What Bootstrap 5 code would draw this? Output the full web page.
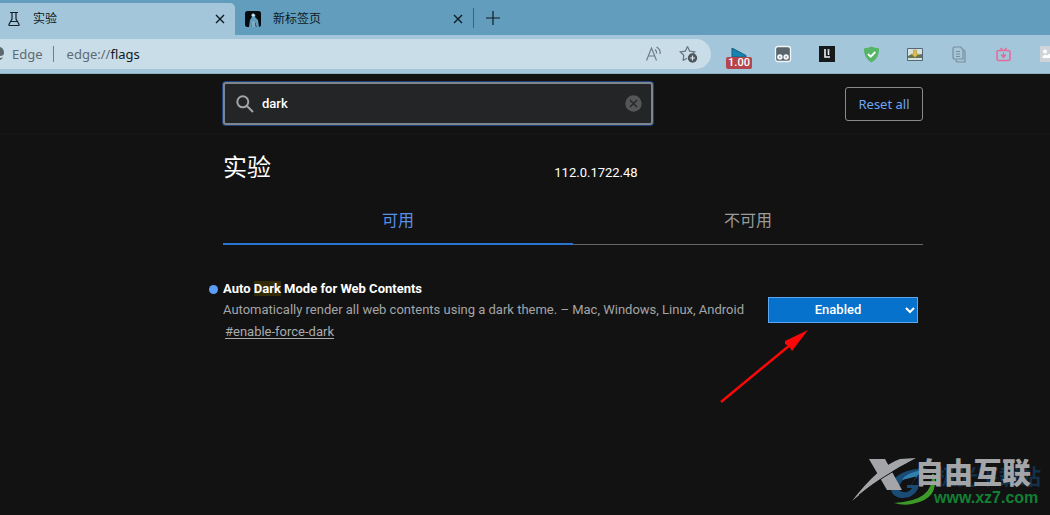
<!DOCTYPE html>
<html lang="zh-CN">
<head>
<meta charset="utf-8">
<meta name="viewport" content="width=device-width, initial-scale=1">
<title>实验</title>
<link href="https://cdn.jsdelivr.net/npm/bootstrap@5.3.0/dist/css/bootstrap.min.css" rel="stylesheet">
<style>
body{background:#121212;color:#fff;font-family:Roboto,"Noto Sans CJK SC",sans-serif;font-size:13px;line-height:20px;min-height:100vh;overflow-x:hidden}
button{font-family:inherit}
svg{display:block;flex:none}
.tabstrip{background:#629dbe;height:35px;font-size:12px;color:#0b1a24}
.tabstrip button,.pill button,.exts button{background:none;border:0;padding:0;color:inherit}
.tab-on{background:#a3c6da;width:235px;height:32px;border-top-right-radius:5px;padding:0 10px 0 6px}
.tab-off{width:238px;height:32px;padding:0 10px}
.tab-sep{width:1px;height:20px;background:#39637c}
.toolbar{background:#a3c6da;height:39px;border-bottom:1px solid #91aebe}
.pill{background:#c8dde8;height:30px;border-radius:0 15px 15px 0;font-family:"Noto Sans","Noto Sans CJK SC",sans-serif;color:#5f6b72;padding-right:13px;font-size:13px}
.pill-sep{width:1px;height:16px;background:#6f7f88;margin:0 13px 0 10px}
.url b{font-weight:400;color:#10181d}
.exts{width:339px;padding-left:6px}
.exts button{width:44px;height:34px;display:flex;align-items:center;justify-content:center;flex:none}
.exts button:last-child{justify-content:flex-start;padding-left:15px}
.rate{background:#b5454d;color:#fff;font:500 11px/12px Roboto,sans-serif;border-radius:2px;padding:0 2px}
.page-col{margin-left:223px;max-width:700px}
.searchbar{height:60px;border-bottom:1px solid #161616}
.searchbox{width:430px;height:43px;background:#242527;border:2px solid #7d868f;border-radius:3px;box-shadow:0 0 0 1px #204078;padding:0 9px 0 11px}
.searchbox input{background:transparent;border:0;outline:0;color:#fff;padding:0;font-weight:500}
.reset-btn{width:78px;height:34px;border:1px solid #8a8a8a;border-radius:3px;color:#6ea6f5;background:none;font:13px/20px "Noto Sans",sans-serif;padding:0}
.exp-head{padding-top:16px}
.exp-title{font-size:24px;line-height:36px;font-weight:400}
.exp-version{padding:13px 52px 0 0}
.flag-tabs{font-size:16px;height:47px;margin-top:12px}
.flag-tabs button{border:0;background:none;color:#9b9b9b;border-bottom:1px solid #666;padding:0 0 1px}
.flag-tabs .on{color:#5a90e8;border-bottom:2px solid #2a74d0;padding:0}
.flag-row{padding-top:30px}
.flag-name{font-weight:700;line-height:20px}
.flag-name mark{background:#332b05;color:#fff;padding:0}
.flag-dot{width:9px;height:9px;background:#5b9df8;left:-14px;top:10px}
.flag-desc{color:#a4a5a6;line-height:22px}
.flag-link{color:#a9abac;line-height:22px;text-underline-offset:2px;margin-left:2px}
.flag-pick{width:150px;margin:22px 5px 0 0}
.flag-pick select{appearance:none;width:100%;height:26px;background:#0672cb;border:1px solid #5da5f0;color:#fff;text-align:center;text-align-last:center;font:500 13px/20px Roboto,sans-serif;padding:0 10px 0 0}
.chevron{right:3px;top:10px}
.pointer{left:-48px;top:32px}
.wm{right:10px;bottom:5px;width:188px;height:56px}
.wm svg{left:0;top:0}
.wm-back{left:84px;top:8px;font:700 21px/26px "Noto Sans CJK SC",sans-serif;color:#143149}
.wm-name{left:63px;top:-1px;font:900 29px/36px "Noto Sans CJK SC",sans-serif;color:#a4a5a8}
.wm-url{left:82px;top:34px;font:700 16px/20px "Liberation Sans",sans-serif;color:#128034}
</style>
<script src="https://cdn.jsdelivr.net/npm/bootstrap@5.3.0/dist/js/bootstrap.bundle.min.js" defer></script>
</head>
<body class="position-relative">
<header>
  <div class="tabstrip d-flex align-items-end">
    <div class="tab-on d-flex align-items-center">
      <svg width="16" height="16" viewBox="0 0 16 16" fill="none" stroke="#15222b" stroke-width="1.2"><path d="M4 1.500h8M6 2v6L3 13.200Q2.500 14.500 3.800 14.500h8.400q1.300 0 .8-1.300L10 8V2M4.500 10.500h7"/></svg>
      <span class="ms-2 flex-grow-1">&nbsp;实验</span>
      <button type="button" aria-label="关闭"><svg width="10" height="10" viewBox="0 0 10 10" stroke="#101b22" stroke-width="1.4"><path d="M1 1l8 8M9 1L1 9"/></svg></button>
    </div>
    <div class="tab-off d-flex align-items-center">
      <svg width="16" height="16" viewBox="0 0 16 16"><rect width="16" height="16" rx="2.500" fill="#060b0e"/><path d="M4 16l1-7 2-3-1-2 2-2 2.500 2L10 6l3 3 1 7h-2.500l-1-4-2-2.500L7 12l-.5 4z" fill="#629dbe"/><path d="M6.500 16L7 11l1.500-2 1.500 2 .8 5z" fill="#7fadc5"/><circle cx="8.300" cy="4.300" r="1.300" fill="#dbe8ee"/></svg>
      <span class="ms-2 ps-1 flex-grow-1">新标签页</span>
      <button type="button" aria-label="关闭"><svg width="10" height="10" viewBox="0 0 10 10" stroke="#101b22" stroke-width="1.4"><path d="M1 1l8 8M9 1L1 9"/></svg></button>
    </div>
    <div class="d-flex align-items-center h-100">
      <span class="tab-sep"></span>
      <button type="button" class="ms-2 ps-1" aria-label="新建标签页"><svg width="14" height="14" viewBox="0 0 14 14" stroke="#101b22" stroke-width="1.200"><path d="M7 0v14M0 7h14"/></svg></button>
    </div>
  </div>
  <div class="toolbar d-flex align-items-center">
    <div class="pill d-flex align-items-center flex-grow-1">
      <svg width="4" height="14" viewBox="0 0 4 14"><path d="M0 0q4 1 4 6 0 3-4 3z" fill="#5d686e"/><path d="M0 11q2 0 3-1-1 3-3 3z" fill="#5d686e"/></svg>
      <span class="ms-2">Edge</span>
      <span class="pill-sep"></span>
      <a href="#" class="url flex-grow-1 text-decoration-none text-reset">edge://<b>flags</b></a>
      <button type="button" class="me-3" aria-label="朗读"><svg width="18" height="18" viewBox="0 0 18 18" fill="none" stroke="#6e7e88" stroke-width="1.200"><path d="M1.500 15.500L6.500 3l5 12.500M3.300 11h6.500M10 4.500q2 1.500 1.500 4M11.500 2q4.500 2.500 3.500 7"/></svg></button>
      <button type="button" aria-label="收藏"><svg width="19" height="19" viewBox="0 0 19 19"><path d="M8.500 1.500l2.200 4.700 5 .7-3.600 3.600M4 15.500l.8-5.200L1.300 6.900l5-.7 2.200-4.700M4 15.500l4-2.200" fill="none" stroke="#65737c" stroke-width="1.200"/><circle cx="13.500" cy="13" r="4.700" fill="#4c565c"/><path d="M13.500 10.500v5M11 13h5" stroke="#dce8ef" stroke-width="1.200"/></svg></button>
    </div>
    <div class="exts d-flex align-items-center overflow-hidden flex-shrink-0">
      <button type="button" class="flex-column pt-2"><svg width="16" height="9" viewBox="0 0 16 9"><path d="M1 0l14 7.500V9H1z" fill="#1683b0" stroke="#195d7d"/></svg><span class="rate">1.00</span></button>
      <button type="button" aria-label="脚本"><svg width="18" height="18" viewBox="0 0 18 18"><rect x="1.500" y="1.500" width="15" height="15" rx="2.500" fill="#58656d" stroke="#f2f5f7" stroke-width="1.300"/><circle cx="5.900" cy="12" r="2.700" fill="#f5f7f8"/><circle cx="12.100" cy="12" r="2.700" fill="#f5f7f8"/><circle cx="5.900" cy="12" r=".8" fill="#58656d"/><circle cx="12.100" cy="12" r=".8" fill="#58656d"/></svg></button>
      <button type="button" aria-label="扩展"><svg width="16" height="16" viewBox="0 0 16 16"><path d="M0 0h16v16H0z" fill="#15191b"/><path d="M6 3v8h5M9.500 5v4M8.500 4h2" fill="none" stroke="#eef2f4" stroke-width="1.600"/></svg></button>
      <button type="button" aria-label="防护"><svg width="17" height="17" viewBox="0 0 17 17"><path d="M8.500.5q3.500 2 7.500 1.800Q16.500 12 8.500 16.500.5 12 1 2.300 5 2.500 8.500.5z" fill="#54b566"/><path d="M5 8l2.700 2.700L12.300 6" fill="none" stroke="#fff" stroke-width="1.800"/></svg></button>
      <button type="button" aria-label="图片下载"><svg width="16" height="13" viewBox="0 0 16 13"><path d="M.5.500h15v12H.5z" fill="#d7e2df" stroke="#536777"/><path d="M1 8l4-2 4 1 6-1v4H1z" fill="#637458"/><path d="M6.500 2h3v4h2L8 9.500 4.500 6h2z" fill="#e3bf45" stroke="#9b8736" stroke-width=".5"/></svg></button>
      <button type="button" aria-label="复制"><svg width="14" height="17" viewBox="0 0 14 17" fill="none" stroke="#7b8e9b" stroke-width="1.200"><path d="M3 1h5.500L11 3.500V13H3q-2 0-2-2V3q0-2 2-2zM11 4q2 0 2 2v10H6q-2 0-2-2M4 5.500h4M4 8h4M4 10.500h4"/></svg></button>
      <button type="button" aria-label="视频下载"><svg width="15" height="15" viewBox="0 0 15 15" fill="none" stroke="#e46b9a" stroke-width="1.500"><rect x="1" y="3.500" width="13" height="10" rx="1.500"/><path d="M4.500 1l2 2M10.500 1l-2 2"/><path d="M7.500 5.500v2.500M5 8h5l-2.500 3z" fill="#e46b9a" stroke-width="1"/></svg></button>
      <button type="button" aria-label="更多"><svg width="16" height="16" viewBox="0 0 16 16"><path d="M0 0h16v16H0z" fill="#d0d4da"/><circle cx="5" cy="5.500" r="2" fill="#fff"/><path d="M2 12q2-5 5-2.500 2-2 4-2t5 4.500z" fill="#fff"/></svg></button>
    </div>
  </div>
</header>
<main>
  <div class="searchbar">
    <div class="page-col d-flex align-items-center justify-content-between h-100">
      <div class="searchbox d-flex align-items-center">
        <svg width="18" height="18" viewBox="0 0 18 18" fill="none" stroke="#a3a5a7" stroke-width="2"><circle cx="6.800" cy="6.800" r="5.500"/><path d="M11 11l6 6"/></svg>
        <input type="text" class="flex-grow-1 ms-2" value="dark" aria-label="搜索标志">
        <button type="button" class="border-0 bg-transparent p-0" aria-label="清除"><svg width="17" height="17" viewBox="0 0 17 17"><circle cx="8.500" cy="8.500" r="8.200" fill="#555657"/><path d="M5 5l7 7M12 5l-7 7" stroke="#27282a" stroke-width="1.500"/></svg></button>
      </div>
      <button type="button" class="reset-btn">Reset all</button>
    </div>
  </div>
  <div class="page-col">
    <div class="exp-head row g-0">
      <h1 class="exp-title col mb-0">实验</h1>
      <div class="exp-version col-auto">112.0.1722.48</div>
      <div class="col-4"></div>
    </div>
    <div class="flag-tabs d-flex" role="tablist">
      <button type="button" class="w-50 on" role="tab" aria-selected="true">可用</button>
      <button type="button" class="w-50" role="tab" aria-selected="false">不可用</button>
    </div>
    <div class="flag-row d-flex justify-content-between align-items-start">
      <div class="position-relative pt-1">
        <span class="flag-dot rounded-circle position-absolute"></span>
        <div class="flag-name"><label for="force-dark">Auto <mark>Dark</mark> Mode for Web Contents</label></div>
        <div class="flag-desc">Automatically render all web contents using a dark theme. – Mac, Windows, Linux, Android</div>
        <a href="#enable-force-dark" class="flag-link">#enable-force-dark</a>
      </div>
      <div class="flag-pick position-relative">
        <select id="force-dark"><option>Default</option><option selected>Enabled</option><option>Disabled</option></select>
        <svg class="chevron position-absolute pe-none" width="10" height="7" viewBox="0 0 10 7"><path d="M1 1l4 4 4-4" fill="none" stroke="#fff" stroke-width="2"/></svg>
        <svg class="pointer position-absolute pe-none" width="90" height="76" viewBox="0 0 90 76"><path d="M1 73L70 16" stroke="#fb0707" stroke-width="2.500"/><path d="M88 1L72 22l-3-5-4-2 0-3z" fill="#fb0707"/></svg>
      </div>
    </div>
  </div>
</main>
<div class="wm position-absolute">
  <span class="wm-back position-absolute text-nowrap">极光下载站</span>
  <svg class="position-absolute" width="90" height="56" viewBox="0 0 90 56"><path d="M76 14Q43 15 39 32q-1 10 10 12 11 1 17-9V31H55v3h5q-3 5-9 4-5-1-4-5Q51 20 76 14z" fill="#194b75"/><path d="M80 20q2 27-38 29 9 3 18 1 28-5 22-30z" fill="#3d9a28"/><path d="M76 15Q54 18 50 26l16-4q-6 6-7 10Q65 18 76 15z" fill="#317fae"/><path d="M17 5h16l17 31H35z" fill="#a4a5a8"/><path d="M64 4Q27 23 0 47 27 12 48 5z" fill="#a4a5a8"/><path d="M64 5Q30 22 7 41" stroke="#121212" stroke-width="1" fill="none"/></svg>
  <span class="wm-name position-absolute text-nowrap">自由互联</span>
  <span class="wm-url position-absolute text-nowrap">www.xz7.com</span>
</div>
</body>
</html>
